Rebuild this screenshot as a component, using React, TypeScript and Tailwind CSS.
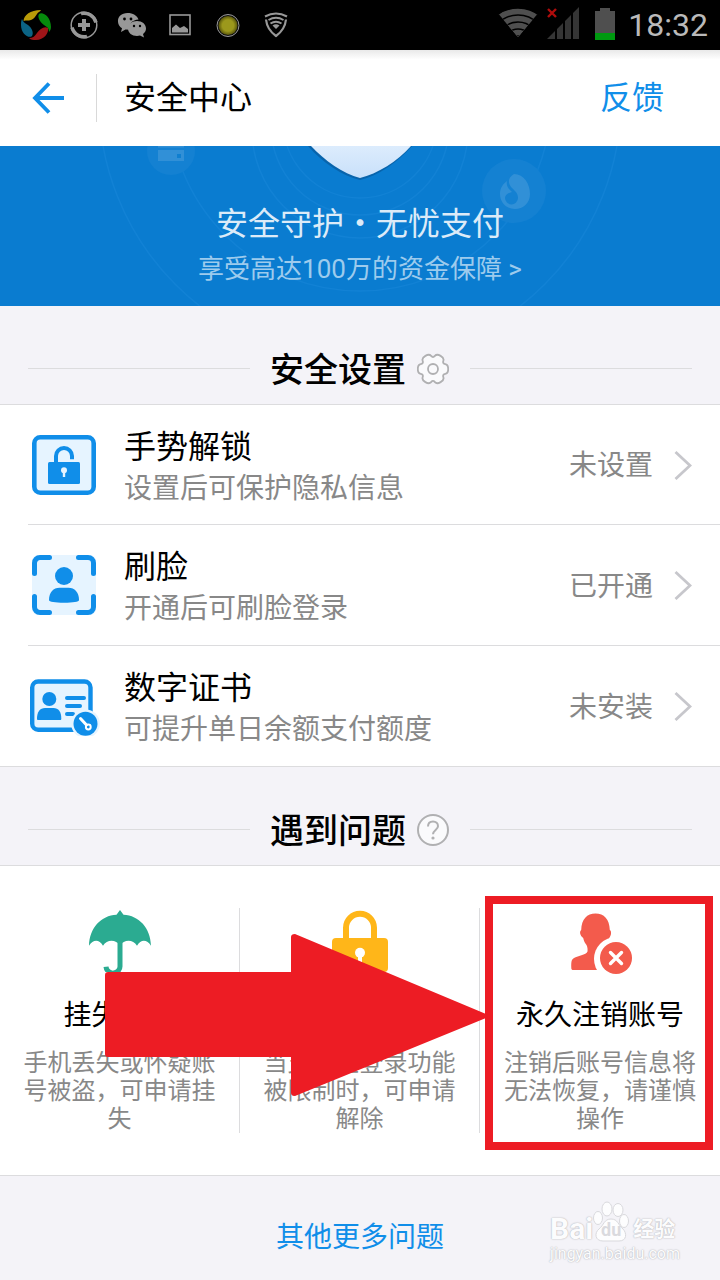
import type { ReactNode } from "react";

const WIFI_RINGS = [36, 29, 22, 15, 8];

function polar(angle: number, radius: number): [number, number] {
  const a = (angle * Math.PI) / 180;
  return [16 + radius * Math.cos(a), 16 + radius * Math.sin(a)];
}

function gearPath() {
  const corners: [number, number][] = [];
  for (let k = 0; k < 6; k++) {
    corners.push(polar(k * 60 - 16, 15.8), polar(k * 60 + 16, 15.8), polar(k * 60 + 30, 10.8));
  }
  const mid = (a: [number, number], b: [number, number]) => `${((a[0] + b[0]) / 2).toFixed(2)} ${((a[1] + b[1]) / 2).toFixed(2)}`;
  let d = `M${mid(corners[corners.length - 1], corners[0])}`;
  corners.forEach((c, i) => {
    d += `Q${c[0].toFixed(2)} ${c[1].toFixed(2)} ${mid(c, corners[(i + 1) % corners.length])}`;
  });
  return d + "Z";
}

function GearIcon() {
  return (
    <svg width="32" height="32" viewBox="0 0 32 32" fill="none" stroke="#b0b0b2" strokeWidth="1.8">
      <path d={gearPath()} fill="#fafafc" />
      <circle cx="16" cy="16" r="5" />
    </svg>
  );
}

function HelpIcon() {
  return (
    <svg width="32" height="32" viewBox="1 1 32 32" fill="none" stroke="#b0b0b2" strokeWidth="2">
      <circle cx="17" cy="17" r="15" fill="#fafafc" />
      <path d="M12 13.500c0-3 2-5 5-5s5 2 5 4.700c0 3.500-5 4-5 8" />
      <circle cx="17" cy="25" r="1.600" fill="#b0b0b2" stroke="none" />
    </svg>
  );
}

function UnlockIcon() {
  return (
    <svg width="64" height="60" viewBox="0 0 64 60" fill="none">
      <rect x="2.300" y="2.300" width="59.400" height="55.400" rx="6" fill="#e6f4ff" stroke="#108ee9" strokeWidth="4.600" />
      <rect x="16" y="27" width="32" height="22" rx="1.500" fill="#108ee9" />
      <path d="M24 28v-7a8 8 0 0 1 16 0v3.300" stroke="#108ee9" strokeWidth="4" />
      <circle cx="32" cy="35.300" r="3" fill="#e6f4ff" />
      <path d="M32 36v6" stroke="#e6f4ff" strokeWidth="2.400" />
    </svg>
  );
}

function FaceIcon() {
  return (
    <svg width="64" height="60" viewBox="0 0 64 60" fill="none">
      <rect width="64" height="60" rx="6" fill="#e6f4ff" />
      <path
        d="M17.500 2.500H8A5.500 5.500 0 0 0 2.500 8v10.500M46.500 2.500H56A5.500 5.500 0 0 1 61.500 8v10.500M2.500 41.500V52A5.500 5.500 0 0 0 8 57.500h9.500M61.500 41.500V52a5.500 5.500 0 0 1-5.500 5.500h-9.500"
        stroke="#108ee9"
        strokeWidth="5"
        strokeLinecap="round"
      />
      <circle cx="32" cy="21" r="9" fill="#108ee9" />
      <path d="M17 45c0-8 4.500-12.300 10.500-12.300h9C42.500 32.700 47 37 47 45c0 2-6 2.700-15 2.700S17 47 17 45Z" fill="#108ee9" />
    </svg>
  );
}

function CertificateIcon() {
  return (
    <svg width="72" height="60" viewBox="0 -3 72 60" fill="none">
      <rect x="4.200" y="2.500" width="58.300" height="48.300" rx="6" fill="#e6f4ff" stroke="#108ee9" strokeWidth="4.400" />
      <circle cx="21.300" cy="20" r="7" fill="#108ee9" />
      <path d="M9 39.500C9 33 12 29 17 29h8.500c5 0 7.800 4 7.800 10.500 0 1-.3 1.500-1.300 1.500H10.300C9.300 41 9 40.500 9 39.500Z" fill="#108ee9" />
      <path d="M39 19h17M39 27h13M39 35h6" stroke="#108ee9" strokeWidth="4" strokeLinecap="round" />
      <circle cx="57.500" cy="44.700" r="14.300" fill="#e6f4ff" />
      <circle cx="57.500" cy="44.700" r="12" fill="#108ee9" />
      <path d="M52.500 39.500l6 6.500" stroke="#fff" strokeWidth="3" strokeLinecap="round" />
      <circle cx="60.300" cy="48" r="2.400" stroke="#fff" strokeWidth="2" />
    </svg>
  );
}

function UmbrellaIcon() {
  return (
    <svg width="64" height="64" viewBox="0 -1 64 64" fill="none">
      <path
        d="M32 1l3.500 4.800C51 6.500 62.500 19 63 36.700C59 30.500 53 30 49 36.700C45 30 36 30 32 36.700C28 30 19 30 15 36.700C11 30 5 30.500 1 36.700C1.500 19 13 6.500 28.500 5.800Z"
        fill="#2bab91"
      />
      <path d="M32 34v22.500a7 7 0 0 1-14 1.200" stroke="#2bab91" strokeWidth="5" />
    </svg>
  );
}

function PadlockIcon() {
  return (
    <svg width="64" height="64" viewBox="0 -1 64 64" fill="none">
      <path d="M18 31V18.700a14 14 0 0 1 28 0V31" stroke="#ffb619" strokeWidth="6" />
      <rect x="4" y="29" width="56" height="34" rx="4" fill="#ffb619" />
      <circle cx="32" cy="43.700" r="5" fill="#fff" />
      <path d="M32 45v9" stroke="#fff" strokeWidth="4" />
    </svg>
  );
}

function RemoveUserIcon() {
  return (
    <svg width="64" height="66" viewBox="0 -2 64 66" fill="none">
      <path
        d="M27.500 3.500C36 3.500 41.500 9 41.800 20c2 1 1.600 5.500-.6 8-1 4-3 6-4.700 8v3c0 6 15 5 15 12v9H5.500c-1.500 0-2.200-.5-2.200-2 0-4.500-.3-8 2-9.500 4-3 13-3.500 14.200-7 .3-1.500 0-5-1-6.500-1.500-2-2.700-4-3.300-7-3.300-2.500-4-6.500-2-8C13.500 9 19 3.500 27.500 3.500Z"
        fill="#f35b4c"
      />
      <circle cx="48" cy="49" r="22" fill="#fff" />
      <circle cx="48" cy="48" r="16" fill="#f35b4c" />
      <path d="M42.500 42.500l11 11m0-11l-11 11" stroke="#fff" strokeWidth="3.400" strokeLinecap="round" />
    </svg>
  );
}

function StatusBar() {
  return (
    <div className="flex h-[50px] items-center justify-between bg-black pr-3 pl-3">
      <div className="flex items-center [&>svg]:mx-2">
        <svg width="32" height="32" viewBox="0 0 32 32">
          <path d="M3.500 12C4 6 10 1 21 1c-1 2-3 2-4 4-2 3-3 5-6 6s-5 0-7.500 1Z" fill="#b99b08" />
          <path d="M19 5c3-3 12 2 12 13 0 2-1 4-2 5 0-4-2-5-5-7-4-3-7-8-5-11Z" fill="#068a0c" />
          <path d="M28 19c1 5-4 12-12 12-3 0-5 0-7-2 4 0 6-2 8-5 3-4 7-7 11-5Z" fill="#9d1518" />
          <path d="M2 10c1 3 3 4 6 6 4 3 6 8 4 11-3 3-11-2-11-11 0-2 0-4 1-6Z" fill="#0b6384" />
        </svg>
        <svg width="32" height="32" viewBox="0 0 32 32" fill="none" stroke="#989898">
          <circle cx="16" cy="16" r="12.800" strokeWidth="1.500" />
          <path d="M13 4.500c6-1.500 13 2 15 9M19 27.500c-6 1.500-13-2-15-9" strokeWidth="3.500" />
          <path d="M16 10v12M10 16h12" strokeWidth="4" />
        </svg>
        <svg width="32" height="32" viewBox="0 0 32 32" fill="#989898">
          <path d="M11.500 4C5.500 4 1.500 7.500 2 13c.2 3 2 5 4 6.300L5 23l4.500-2.500 4 .3c-1-6 3-10 9-10.300C21 6.500 17 4 11.500 4Z" />
          <path d="M21 12c-5 0-9 3-9 7.500s4 7.500 9 7.500l3-.5 4 2-1-3.500c2-1.500 3-3.500 3-5.500 0-4.500-4-7.500-9-7.500Z" />
          <g fill="#000">
            <circle cx="8.500" cy="10" r="1.400" />
            <circle cx="15" cy="10" r="1.400" />
            <circle cx="18" cy="17" r="1.200" />
            <circle cx="24" cy="17" r="1.200" />
          </g>
        </svg>
        <svg width="32" height="32" viewBox="0 0 32 32" fill="none">
          <rect x="6" y="6" width="20" height="19.500" stroke="#989898" strokeWidth="1.600" />
          <path d="M8 23.500V19l4-3.500 4 3.500 4-2 4 3v3.500Z" fill="#989898" />
        </svg>
        <svg width="32" height="32" viewBox="0 0 32 32">
          <defs>
            <radialGradient id="orb">
              <stop offset="0.600" stopColor="#9c981c" />
              <stop offset="1" stopColor="#57540a" />
            </radialGradient>
          </defs>
          <circle cx="16" cy="16.500" r="11" fill="#111" stroke="#9a9a9a" />
          <circle cx="16" cy="16.500" r="9.500" fill="url(#orb)" />
        </svg>
        <svg width="32" height="32" viewBox="0 0 32 32" fill="none" stroke="#989898">
          <path d="M5 7.500Q16 1.500 27 7.500" strokeWidth="2" />
          <path d="M6 10.500q1 10 10 16.500 9-6.500 10-16.500" strokeWidth="2.200" />
          <path d="M8.500 11q7.500-4.500 15 0M10.500 14.500q5.500-3.500 11 0" strokeWidth="2" />
          <path d="M12.500 16.500q3.500-2.500 7 0L16 20Z" fill="#989898" stroke="none" />
        </svg>
      </div>
      <div className="flex items-center gap-3">
        <svg width="118" height="36" viewBox="0 0 118 36">
          <clipPath id="wifi-fan">
            <path d="M20 30L-2 4V-4h44v8Z" />
          </clipPath>
          <g clipPath="url(#wifi-fan)">
            {WIFI_RINGS.map((r) => (
              <circle key={r} cx="20" cy="36" r={r - 1} fill="#4f4f4f" stroke="#000" strokeWidth="1.500" />
            ))}
          </g>
          <path d="M50 2l8 8m0-8l-8 8" stroke="#b00c0c" strokeWidth="2.400" />
          <path d="M49 32l8-8v8ZM59 22l6-6v16h-6ZM67 14l6-6v24h-6ZM75 6l6-6v32h-6Z" fill="#353535" />
          <path d="M97 4h5V1h10v3h5v22H97Z" fill="#4f4f4f" />
          <path d="M97 26h20v7H97Z" fill="#009a10" />
        </svg>
        <time className="text-[32px] leading-10 text-[#bababa]">18:32</time>
      </div>
    </div>
  );
}

function Header() {
  return (
    <header className="flex h-24 items-center bg-linear-to-b from-[#e9e9e9] via-white via-10% to-white pr-14">
      <button type="button" aria-label="返回" className="flex h-12 w-[97px] items-center border-r border-[#d9d9d9] pl-8">
        <svg width="33" height="32" viewBox="0 0 33 32" fill="none" stroke="#108ee9" strokeWidth="3.800">
          <path d="M17 1.500L3 16l14 14.500M3 16h29" />
        </svg>
      </button>
      <h1 className="flex-1 pl-[27px] text-[32px] leading-10">安全中心</h1>
      <button type="button" className="text-[32px] leading-10 text-[#108ee9]">反馈</button>
    </header>
  );
}

function Banner() {
  return (
    <a href="#guarantee" className="relative flex h-40 flex-col items-center overflow-hidden bg-[#0a7cd0] pt-[56px]">
      <svg className="absolute top-0 left-1/2 -translate-x-1/2" width="720" height="160" viewBox="0 146 720 160" fill="none">
        <defs>
          <linearGradient id="shield" x1="0" y1="0" x2="0" y2="1">
            <stop offset="0" stopColor="#dcecfd" />
            <stop offset="1" stopColor="#c9e0fa" />
          </linearGradient>
        </defs>
        <g stroke="#1a88da" strokeWidth="1.500" opacity="0.500">
          <circle cx="360" cy="100" r="261" />
          <circle cx="360" cy="100" r="191" />
          <circle cx="360" cy="130" r="108" />
          <circle cx="360" cy="126" r="89" />
          <circle cx="360" cy="121" r="77" />
        </g>
        <circle cx="171" cy="151" r="24" fill="#1481d2" />
        <path d="M158 140h26v7.500h-26ZM158 150h26v11h-26Z" fill="#3190d7" />
        <rect x="177" y="154" width="4" height="4" fill="#0f7fd0" />
        <circle cx="514" cy="191" r="32" fill="#1481d2" />
        <path
          fillRule="evenodd"
          d="M514 174c10 0 16 10 16 20 0 9-7 15-15 15s-15-6-15-15c0-6 3-10 7-13-1 4 1 8 5 11-4 1-7 3-7 6a6.500 6.500 0 0 0 13 0c0-5-3-7-6-10-4-4-5-10 2-14Z"
          fill="#3190d7"
        />
        <path d="M308 146c14 16 34 30 52 34 18-4 38-18 52-34Z" fill="#075a9c" opacity="0.700" />
        <path d="M311 146c13 14 32 28 49 32 17-4 38-17 51-32Z" fill="url(#shield)" />
      </svg>
      <strong className="relative text-[32px] leading-[44px] font-normal text-[#dcebf8]">安全守护・无忧支付</strong>
      <span className="relative text-[26px] leading-[46px] text-[#9dcbed]">享受高达100万的资金保障 &gt;</span>
    </a>
  );
}

function SectionHeading({ title, label, icon }: { title: string; label: string; icon: ReactNode }) {
  return (
    <div className="flex h-[98px] items-center px-7 pt-[27px]">
      <span className="h-px flex-1 bg-[#dcdcde]" />
      <h2 className="pt-[3px] pr-[11px] pl-5 text-[34px] leading-[42px] font-medium">{title}</h2>
      <button type="button" aria-label={label} className="pr-[21px]">{icon}</button>
      <span className="h-px flex-1 bg-[#dcdcde]" />
    </div>
  );
}

const SETTINGS = [
  { title: "手势解锁", note: "设置后可保护隐私信息", status: "未设置", icon: <UnlockIcon /> },
  { title: "刷脸", note: "开通后可刷脸登录", status: "已开通", icon: <FaceIcon /> },
  { title: "数字证书", note: "可提升单日余额支付额度", status: "未安装", icon: <CertificateIcon /> },
];

const PROBLEMS = [
  { title: "挂失账号", note: "手机丢失或怀疑账号被盗，可申请挂失", icon: <UmbrellaIcon /> },
  { title: "解除限制", note: "当支付宝登录功能被限制时，可申请解除", icon: <PadlockIcon /> },
  { title: "永久注销账号", note: "注销后账号信息将无法恢复，请谨慎操作", icon: <RemoveUserIcon /> },
];

function Settings() {
  return (
    <ul className="border-y border-[#dcdcde] bg-white">
      {SETTINGS.map((item) => (
        <li key={item.title} className="ml-7 h-[121px] border-b border-[#dcdcde] first:h-[120px] last:h-[120px] last:border-b-0">
          <a href="#setting" className="flex h-full items-center pr-7">
            <span className="flex w-[72px] justify-center">{item.icon}</span>
            <span className="flex flex-1 flex-col pt-1.5 pl-6">
              <span className="text-[32px] leading-[42px]">{item.title}</span>
              <span className="text-[28px] leading-[42px] text-[#888]">{item.note}</span>
            </span>
            <span className="pt-[3px] pr-[21px] text-[28px] leading-10 text-[#888]">{item.status}</span>
            <svg width="18" height="30" viewBox="0 0 18 30" fill="none" stroke="#c7c7cc" strokeWidth="2.800">
              <path d="M1.500 2L16 15.500 1.500 29" />
            </svg>
          </a>
        </li>
      ))}
    </ul>
  );
}

function Problems() {
  return (
    <div className="relative border-y border-[#dcdcde] bg-white">
      <div className="grid h-[309px] grid-cols-3">
        {PROBLEMS.map((item, i) => (
          <div key={item.title} className="relative flex py-[42px]">
            <a href="#problem" className={`flex flex-1 flex-col items-center px-[23px] ${i < 2 ? "border-r border-[#dcdcde]" : ""}`}>
              <span className="h-16">{item.icon}</span>
              <span className="pt-6 text-[28px] leading-10 whitespace-nowrap">{item.title}</span>
              <span className="w-48 pt-[13px] text-center text-[24px] leading-7 text-[#888]">{item.note}</span>
            </a>
            {i === 2 && <span className="absolute top-[30px] right-[7px] bottom-[25px] left-[5px] border-8 border-[#ed1c24]" />}
          </div>
        ))}
      </div>
      <svg className="pointer-events-none absolute top-[68px] left-[105px]" width="383" height="163" viewBox="0 0 383 163">
        <path d="M3 38H186V3q0-3 4-3L381 80q3 2 0 4L190 162q-4 0-4-3V123H3q-3 0-3-3V41q0-3 3-3Z" fill="#ed1c24" />
      </svg>
    </div>
  );
}

function Watermark() {
  return (
    <div className="pointer-events-none absolute right-10 bottom-4 flex flex-col text-[#fcfcfd] [text-shadow:0_0_1px_#b4b4b8,0_0_2px_#c4c4c8]">
      <div className="flex h-11 items-end">
        <span className="text-[30px] leading-[30px] font-bold">Bai</span>
        <span className="relative flex h-11 w-9 items-end justify-center">
          <svg className="absolute inset-0" width="36" height="44" viewBox="0 0 36 44" fill="#fdfdfe" stroke="#d9d9dd">
            <ellipse cx="5" cy="18" rx="4.500" ry="6.500" />
            <ellipse cx="14" cy="9" rx="5" ry="7" />
            <ellipse cx="25" cy="10" rx="5" ry="6.500" />
            <ellipse cx="31" cy="21" rx="4.500" ry="6.500" />
            <path d="M18 19c7 0 7 6 12 10 4 4 4 12-4 12H10c-8 0-9-8-4-12 5-4 5-10 12-10Z" />
          </svg>
          <span className="relative text-[18px] leading-7 font-bold text-[#dadade] [text-shadow:none]">du</span>
        </span>
        <span className="pl-1 text-[21px] leading-[30px] font-bold">经验</span>
      </div>
      <span className="text-[16px] leading-5">jingyan.baidu.com</span>
    </div>
  );
}

export default function App() {
  return (
    <div lang="zh-CN" className="flex min-h-screen flex-col overflow-x-hidden bg-[#f4f3f8] font-[Roboto,'Noto_Sans_CJK_SC',sans-serif] text-black">
      <StatusBar />
      <Header />
      <main className="flex flex-col">
        <Banner />
        <SectionHeading title="安全设置" label="设置" icon={<GearIcon />} />
        <Settings />
        <SectionHeading title="遇到问题" label="帮助" icon={<HelpIcon />} />
        <Problems />
      </main>
      <footer className="relative flex flex-1 justify-center pt-[42px] pb-5">
        <a href="#more" className="text-[28px] leading-10 text-[#108ee9]">其他更多问题</a>
        <Watermark />
      </footer>
    </div>
  );
}
